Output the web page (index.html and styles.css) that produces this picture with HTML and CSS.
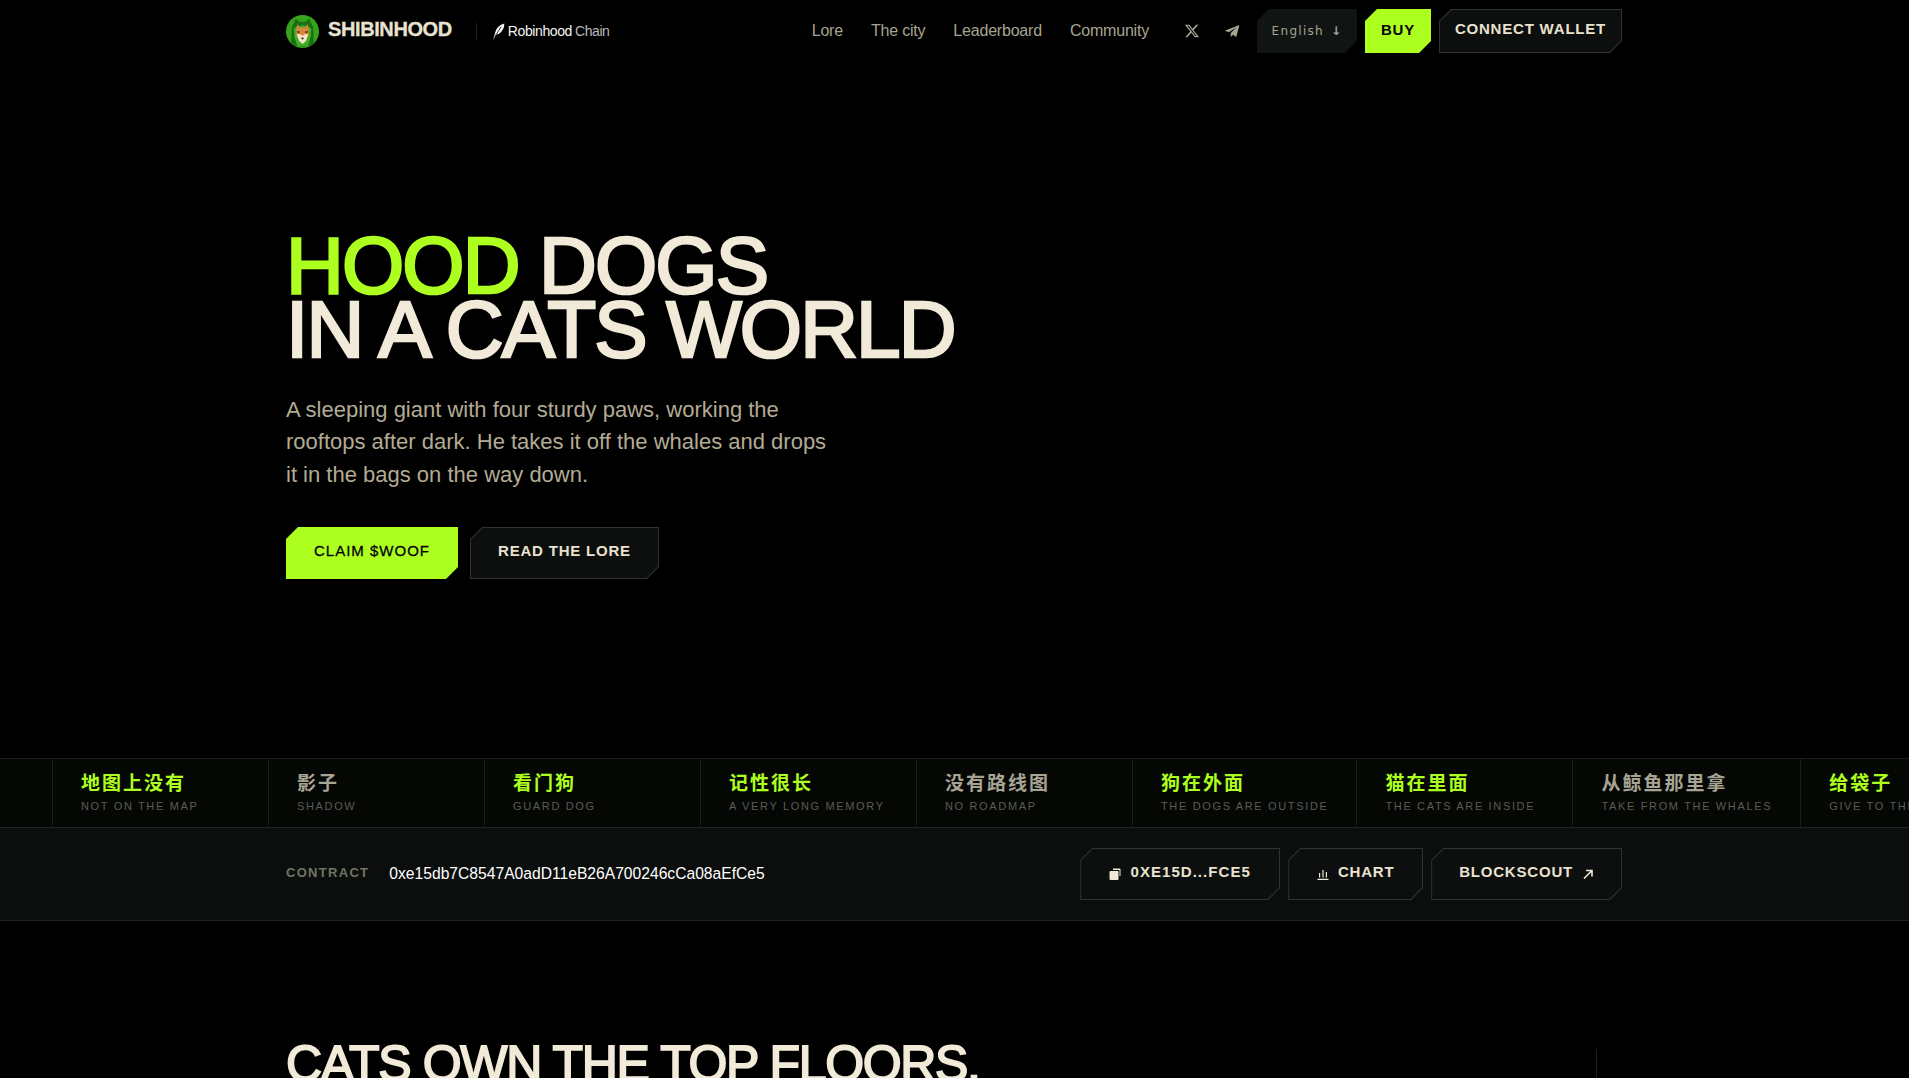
FILE: index.html
```html
<!DOCTYPE html>
<html lang="en">
<head>
    <meta charset="UTF-8">
    <title>Shibinhood</title>
    <link rel="stylesheet" href="styles.css">
</head>
<body>
    <header class="topbar">
        <a class="brand">
            <svg class="brand-logo" viewBox="0 0 32 32">
                <circle cx="16" cy="16" r="16" fill="#37a51c"/>
                <path d="M5 28 L5.500 12 L9.500 3.500 L13 6.500 L19 6.500 L22.500 3.500 L26.500 12 L27 28 Q16 33 5 28Z" fill="#1c6f14"/>
                <path d="M8 21 L7.500 13 Q16 7 24.500 13 L24 21 L21 30 L11 30Z" fill="#3fae22"/>
                <path d="M10 13 L11 9 L13.500 12 L18.500 12 L21 9 L22 13 L22 20 L16 27 L10 20Z" fill="#d9863f"/>
                <path d="M10.500 19 Q13 17.500 16 20 Q19 17.500 21.500 19 L19.500 25 L16 28 L12.500 25Z" fill="#f6e4c8"/>
                <path d="M11 15.500 L14 16.500 L11.500 17.500Z M21 15.500 L18 16.500 L20.500 17.500Z" fill="#1a1208"/>
                <path d="M14.500 22 H17.500 L16 24Z" fill="#1a1208"/>
            </svg>
            <span class="brand-name">SHIBINHOOD</span>
        </a>
        <span class="chain">
            <svg class="chain-icon" viewBox="0 0 12 16">
                <path d="M1 15.500 L3 8.500 Q4.500 2.500 11.500 0.500 Q11.500 7 6.500 10 L4 11 Z" fill="#f4f4f4"/>
                <path d="M2.500 13 L8.500 3.500" stroke="#000" stroke-width="0.700"/>
            </svg>
            <b>Robinhood</b> <span class="chain-dim">Chain</span>
        </span>

        <nav class="nav-links">
            <a>Lore</a>
            <a>The city</a>
            <a>Leaderboard</a>
            <a>Community</a>
        </nav>

        <div class="nav-socials">
            <svg class="social" viewBox="0 0 24 24"><path d="M18.200 2.500h3.300l-7.200 8.200L22.800 21.500h-6.600l-5.200-6.800-6 6.800H1.700l7.700-8.800L1.300 2.500h6.800l4.700 6.200zm-1.200 17.100h1.800L7 4.300H5z" fill="#a8a493"/></svg>
            <svg class="social" viewBox="0 0 24 24"><path d="M23 3 L1 11.500 L7.500 14 L18.500 6.500 L10 15.500 L10 21 L13.500 17.500 L18.500 21Z" fill="#a8a493"/></svg>
        </div>

        <div class="nav-actions">
            <button class="cut cut-lang">English <span class="lang-arrow">↓</span></button>
            <button class="cut cut-lime cut-buy">BUY</button>
            <button class="cut cut-line cut-wallet">CONNECT WALLET</button>
        </div>
    </header>

    <section class="hero">
        <h1><span class="lime">HOOD</span> DOGS<br>IN A CATS WORLD</h1>
        <p>A sleeping giant with four sturdy paws, working the rooftops after dark. He takes it off the whales and drops it in the bags on the way down.</p>
        <div class="hero-actions">
            <button class="cut cut-lime cut-big cut-claim">CLAIM $WOOF</button>
            <button class="cut cut-line cut-big">READ THE LORE</button>
        </div>
    </section>

    <section class="ticker">
        <div class="tick tick-lead"></div>
        <div class="tick"><strong class="lime">地图上没有</strong><small>NOT ON THE MAP</small></div>
        <div class="tick"><strong>影子</strong><small>SHADOW</small></div>
        <div class="tick"><strong class="lime">看门狗</strong><small>GUARD DOG</small></div>
        <div class="tick"><strong class="lime">记性很长</strong><small>A VERY LONG MEMORY</small></div>
        <div class="tick"><strong>没有路线图</strong><small>NO ROADMAP</small></div>
        <div class="tick"><strong class="lime">狗在外面</strong><small>THE DOGS ARE OUTSIDE</small></div>
        <div class="tick"><strong class="lime">猫在里面</strong><small>THE CATS ARE INSIDE</small></div>
        <div class="tick"><strong>从鲸鱼那里拿</strong><small>TAKE FROM THE WHALES</small></div>
        <div class="tick"><strong class="lime">给袋子</strong><small>GIVE TO THE BAGS</small></div>
    </section>

    <section class="contract">
        <span class="contract-label">CONTRACT</span>
        <span class="contract-addr">0xe15db7C8547A0adD11eB26A700246cCa08aEfCe5</span>
        <div class="contract-actions">
            <button class="cut cut-line cut-big cut-addr">
                <svg class="btn-icon" viewBox="0 0 12 12"><path d="M4 0.500h6.500a1 1 0 0 1 1 1V8H10.500V2H4z" fill="#efe8d8"/><rect x="0.500" y="3" width="9" height="9" rx="1" fill="#efe8d8"/></svg>
                0XE15D...FCE5
            </button>
            <button class="cut cut-line cut-big cut-chart">
                <svg class="btn-icon" viewBox="0 0 12 12"><path d="M2 5h1.200v4.500H2zM5.400 2h1.200v7.500H5.400zM8.800 4h1.200v5.500H8.800zM0.500 10.800h11V12H0.500z" fill="#efe8d8"/></svg>
                CHART
            </button>
            <button class="cut cut-line cut-big">
                BLOCKSCOUT
                <svg class="btn-icon btn-icon-after" viewBox="0 0 12 12"><path d="M2 10.500L10 2.500M4 2.500h6v6" fill="none" stroke="#efe8d8" stroke-width="1.600"/></svg>
            </button>
        </div>
    </section>

    <section class="floors">
        <h2>CATS OWN THE TOP FLOORS.</h2>
        <div class="floors-rule"></div>
    </section>
</body>
</html>
```

FILE: styles.css
```css
html, body {
    height: 100%;
    overflow: hidden;
}

body {
    margin: 0;
    background: #000;
    color: #f2ead9;
    font-family: "Liberation Sans", "Noto Sans CJK SC", sans-serif;
}

.lime {
    color: #adff1f;
}

/* top bar */
.topbar {
    display: flex;
    align-items: center;
    height: 44px;
    padding: 9px 287px 0 286px;
}

.brand {
    display: flex;
    align-items: center;
    gap: 9px;
}

.brand-logo {
    width: 33px;
    height: 33px;
}

.brand-name {
    margin-top: -3px;
    font-size: 20px;
    font-weight: bold;
    letter-spacing: -0.4px;
    color: #e9e2d0;
    -webkit-text-stroke: 0.3px currentColor;
}

.chain {
    display: flex;
    align-items: center;
    gap: 3px;
    margin-left: 24px;
    padding-left: 15px;
    border-left: 1px solid #1c1f1c;
    font-size: 14px;
    letter-spacing: -0.4px;
    color: #f4f4f4;
}

.chain b {
    font-weight: normal;
}

.chain-icon {
    width: 13px;
    height: 17px;
}

.chain-dim {
    color: #b9b9b9;
}

.nav-links {
    display: flex;
    gap: 28px;
    margin-left: auto;
    font-size: 16px;
    letter-spacing: -0.2px;
    color: #a8a493;
}

.nav-socials {
    display: flex;
    gap: 24px;
    margin-left: 35px;
}

.social {
    width: 16px;
    height: 16px;
}

.nav-actions {
    display: flex;
    gap: 8px;
    margin-left: 17px;
}

/* chamfered buttons */
.cut {
    position: relative;
    z-index: 0;
    display: inline-flex;
    align-items: center;
    justify-content: center;
    height: 44px;
    border: none;
    padding: 0 0 5px;
    white-space: nowrap;
    font-family: inherit;
    font-weight: bold;
    font-size: 15px;
    letter-spacing: 0.8px;
    color: #e9e2d0;
    background: none;
    clip-path: polygon(12px 0, 100% 0, 100% calc(100% - 12px), calc(100% - 12px) 100%, 0 100%, 0 12px);
}

.cut-lime {
    background: #adff1f;
    color: #050505;
}

.cut-line {
    background: #2d352c;
}

.cut-line::before {
    content: "";
    position: absolute;
    inset: 1px;
    z-index: -1;
    background: #0c0f0e;
    clip-path: polygon(11.600px 0, 100% 0, 100% calc(100% - 11.600px), calc(100% - 11.600px) 100%, 0 100%, 0 11.600px);
}

.cut-lang {
    width: 100px;
    padding-bottom: 0;
    background: #101412;
    color: #a8a493;
    letter-spacing: 1.3px;
    font-weight: normal;
    font-family: "DejaVu Sans", sans-serif;
    font-size: 12px;
}

.lang-arrow {
    margin-left: 7px;
    font-weight: bold;
}

.cut-buy {
    width: 66px;
    padding-bottom: 4px;
}

.cut-wallet {
    width: 183px;
}

.cut-big {
    height: 52px;
    padding: 0 28px 5px;
    letter-spacing: 0.8px;
}

.cut-claim {
    font-weight: normal;
    letter-spacing: 1px;
    -webkit-text-stroke: 0.3px currentColor;
}

.cut-addr {
    width: 200px;
    padding: 0 0 5px;
    letter-spacing: 1.050px;
}

.cut-chart {
    width: 135px;
    padding: 0 0 5px;
}

/* hero */
.hero {
    padding: 181px 0 0 286px;
}

.hero h1 {
    margin: 0;
    font-size: 80px;
    line-height: 64px;
    letter-spacing: -1.850px;
    font-weight: normal;
    -webkit-text-stroke: 2.600px currentColor;
}

.hero p {
    width: 545px;
    margin: 32px 0 0;
    font-size: 22px;
    line-height: 32.300px;
    color: #b3ab94;
}

.hero-actions {
    display: flex;
    gap: 12px;
    margin-top: 36px;
}

/* ticker strip */
.ticker {
    display: flex;
    margin-top: 179px;
    height: 68px;
    overflow: hidden;
    background: #050705;
    border-top: 1px solid #1b201c;
    border-bottom: 1px solid #1f2622;
}

.tick {
    flex: none;
    box-sizing: border-box;
    min-width: 216px;
    padding: 12px 28px 0;
    border-right: 1px solid #1b201c;
}

.tick-lead {
    min-width: 53px;
    padding: 0;
}

.tick strong {
    display: block;
    font-size: 19px;
    line-height: 26px;
    letter-spacing: 2px;
    color: #a8a493;
}

.tick strong.lime {
    color: #adff1f;
}

.tick small {
    display: block;
    margin-top: 2px;
    font-size: 11px;
    line-height: 14px;
    letter-spacing: 1.650px;
    color: #5c5c55;
}

/* contract bar */
.contract {
    display: flex;
    align-items: center;
    height: 92px;
    padding: 0 287px 0 286px;
    background: #0b0e0d;
    border-bottom: 1px solid #1b201c;
}

.contract-label {
    margin-top: -2px;
    font-size: 13px;
    font-weight: bold;
    letter-spacing: 1.300px;
    color: #6f7565;
}

.contract-addr {
    margin-left: 20px;
    font-size: 15.650px;
    color: #fff;
}

.contract-actions {
    display: flex;
    gap: 8px;
    margin-left: auto;
}

.btn-icon {
    width: 12px;
    height: 12px;
    margin-right: 9px;
    margin-top: 5px;
}

.btn-icon-after {
    margin-right: 0;
    margin-left: 9px;
}

/* next section, cut off by the fold */
.floors {
    position: relative;
    padding: 118px 0 0 286px;
}

.floors h2 {
    margin: 0;
    font-size: 50px;
    line-height: 1;
    letter-spacing: -1.350px;
    font-weight: normal;
    -webkit-text-stroke: 1.800px currentColor;
}

.floors-rule {
    position: absolute;
    top: 128px;
    left: 1596px;
    width: 1px;
    height: 100px;
    background: #1b201c;
}
```
